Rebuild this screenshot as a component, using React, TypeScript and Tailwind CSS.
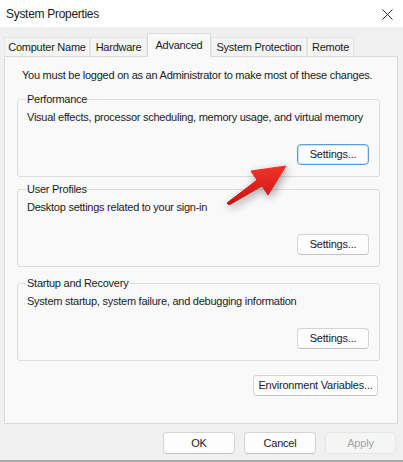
import React from "react";

const font = { fontFamily: '"Liberation Sans", Arial, sans-serif' };

function Btn({
  children,
  className = "",
  focused = false,
  disabled = false,
}: {
  children: React.ReactNode;
  className?: string;
  focused?: boolean;
  disabled?: boolean;
}) {
  const base =
    "flex items-center justify-center rounded-[4px] text-[11px] tracking-[-0.2px] leading-none ";
  const look = disabled
    ? "bg-[#f5f5f5] border border-[#e6e6e6] text-[#a3a3a3]"
    : focused
    ? "bg-[#fdfdfd] border border-[#5a9ddf] shadow-[inset_0_0_0_1px_#cfe3f7] text-[#1b1b1b]"
    : "bg-[#fdfdfd] border border-[#d4d4d4] border-b-[#c2c2c2] text-[#1b1b1b]";
  return <div className={base + look + " " + className}>{children}</div>;
}

function Group({
  title,
  desc,
  className = "",
  focused = false,
}: {
  title: string;
  desc: string;
  className?: string;
  focused?: boolean;
}) {
  return (
    <fieldset
      className={
        "ml-[12px] w-[363px] border border-[#dcdcdc] rounded-[3px] pl-[9px] pr-[10px] pb-[11px] " +
        className
      }
    >
      <legend className="-ml-[1px] px-[1px] h-[14px] leading-[14px] text-[11px] tracking-[-0.25px] text-[#1b1b1b]">
        {title}
      </legend>
      <div className="pt-[4px] h-[18px] leading-[14px] text-[11px] tracking-[-0.25px] text-[#1b1b1b]">
        {desc}
      </div>
      <div className="flex justify-end mt-[20px]">
        <Btn focused={focused} className="w-[72px] h-[21px]">
          Settings...
        </Btn>
      </div>
    </fieldset>
  );
}

export default function App() {
  const tabs = [
    { label: "Computer Name", w: "w-[86px]" },
    { label: "Hardware", w: "w-[57px]" },
    { label: "Advanced", w: "w-[64px]", active: true },
    { label: "System Protection", w: "w-[96px]" },
    { label: "Remote", w: "w-[47px]" },
  ];
  return (
    <div
      style={font}
      className="relative w-[403px] h-[462px] bg-[#f0f0f0] flex flex-col overflow-hidden text-[#1b1b1b]"
    >
      {/* Title bar */}
      <div className="h-[27px] bg-white flex items-center justify-between pl-[6px] pr-[10px]">
        <span className="text-[12px] tracking-[-0.3px] pt-[1px]">System Properties</span>
        <svg width="11" height="11" viewBox="0 0 11 11" className="mt-[1px]">
          <path d="M0.5 0.5 L10.5 10.5 M10.5 0.5 L0.5 10.5" stroke="#2b2b2b" strokeWidth="1" />
        </svg>
      </div>

      {/* Tabs */}
      <div className="mt-[6px] h-[23px] flex items-end pl-[4px] relative z-10">
        {tabs.map((t) =>
          t.active ? (
            <div
              key={t.label}
              className={
                t.w +
                " h-[24px] -mb-[1px] bg-[#f9f9f9] border border-b-0 border-[#dadada] flex items-start justify-center pt-[4px] text-[11px] tracking-[-0.25px] leading-[14px]"
              }
            >
              {t.label}
            </div>
          ) : (
            <div
              key={t.label}
              className={
                t.w +
                " h-[19px] bg-[#f4f4f4] border border-b-0 border-[#e6e6e6] flex items-start justify-center pt-[2px] text-[11px] tracking-[-0.25px] leading-[14px]"
              }
            >
              {t.label}
            </div>
          )
        )}
      </div>

      {/* Panel */}
      <div className="ml-[4px] w-[394px] h-[368px] border border-[#dadada] bg-[#f9f9f9] flex flex-col">
        <div className="pl-[17px] pt-[11px] h-[25px] leading-[14px] text-[11px] tracking-[-0.25px]">
          You must be logged on as an Administrator to make most of these changes.
        </div>
        <Group
          className="mt-[10px]"
          title="Performance"
          desc="Visual effects, processor scheduling, memory usage, and virtual memory"
          focused
        />
        <Group
          className="mt-[5px]"
          title="User Profiles"
          desc="Desktop settings related to your sign-in"
        />
        <Group
          className="mt-[9px]"
          title="Startup and Recovery"
          desc="System startup, system failure, and debugging information"
        />
        <div className="flex justify-end pr-[19px] mt-[14px]">
          <Btn className="w-[125px] h-[21px]">Environment Variables...</Btn>
        </div>
      </div>

      {/* Footer */}
      <div className="flex-1 flex justify-end items-start gap-[9px] pr-[7px] pt-[8px]">
        <Btn className="w-[72px] h-[22px]">OK</Btn>
        <Btn className="w-[72px] h-[22px]">Cancel</Btn>
        <Btn className="w-[71px] h-[22px]" disabled>
          Apply
        </Btn>
      </div>
      <div className="h-[2px] bg-[#a8a8a8]" />

      {/* Red arrow annotation */}
      <svg
        className="absolute left-[220px] top-[155px] pointer-events-none"
        width="75"
        height="55"
        viewBox="0 0 75 55"
        style={{ filter: "drop-shadow(2px 3px 4px rgba(0,0,0,0.35))" }}
      >
        <defs>
          <linearGradient id="rg" x1="0" y1="0" x2="0" y2="1">
            <stop offset="0" stopColor="#f2322a" />
            <stop offset="1" stopColor="#c91414" />
          </linearGradient>
        </defs>
        <polygon
          points="7,48 37,25 31,16 66,11 48,40 42,31 9,50"
          fill="url(#rg)"
          stroke="url(#rg)"
          strokeWidth="1"
          strokeLinejoin="round"
        />
      </svg>
    </div>
  );
}
